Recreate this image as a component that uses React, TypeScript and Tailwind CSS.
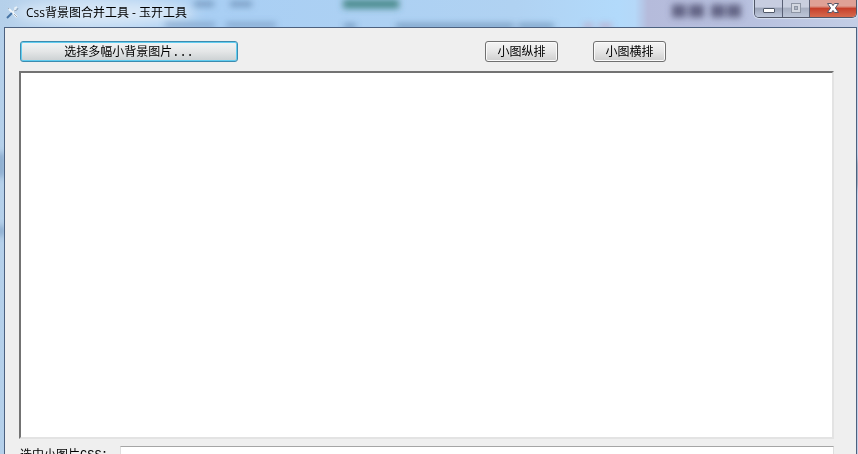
import React, { useState } from 'react';

const toolButton =
  'h-[21px] rounded-[3px] border border-[#707070] bg-linear-to-b from-[#f4f4f4] via-[#e6e6e6] to-[#cfcfcf] pt-0.5 text-center shadow-[inset_0_0_0_1px_#fafafa]';

// blurred desktop content that shines through the glass frame
const GlassBackdrop = () => (
  <svg
    aria-hidden="true"
    className="absolute inset-0 h-full w-full"
    preserveAspectRatio="none"
    viewBox="0 0 858 454"
  >
    <defs>
      <linearGradient id="glass" x1="0" x2="1" y1="0" y2="0">
        <stop offset="0" stopColor="#b5d0ea" />
        <stop offset="0.1" stopColor="#bdd7f1" />
        <stop offset="0.25" stopColor="#a9cff4" />
        <stop offset="0.6" stopColor="#b0d2f2" />
        <stop offset="0.72" stopColor="#b2dafb" />
        <stop offset="0.74" stopColor="#b5d8f8" />
        <stop offset="0.755" stopColor="#b5bbdb" />
        <stop offset="0.88" stopColor="#b8c1df" />
        <stop offset="1" stopColor="#c3cee6" />
      </linearGradient>
      <filter id="soft" x="-20%" y="-100%" width="140%" height="300%">
        <feGaussianBlur stdDeviation="3" />
      </filter>
      <filter id="haze" x="-30%" y="-100%" width="160%" height="300%">
        <feGaussianBlur stdDeviation="6" />
      </filter>
    </defs>
    <rect width="858" height="454" fill="url(#glass)" />
    <ellipse cx="105" cy="13" rx="90" ry="11" fill="#d9e8f7" filter="url(#haze)" />
    <g filter="url(#soft)">
      <path d="M194 4h20M230 4h22" stroke="#6184ab" strokeWidth="6" opacity="0.65" />
      <path d="M165 25h50M226 25h50" stroke="#6b8eb4" strokeWidth="5" opacity="0.65" />
      <path d="M343 4h56" stroke="#3a7f79" strokeWidth="9" opacity="0.85" />
      <path d="M344 26h12M396 26h118M518 26h36" stroke="#5379a0" strokeWidth="4" opacity="0.75" />
      <path d="M584 26h9M599 26h13" stroke="#c9859f" strokeWidth="4" opacity="0.6" />
      <path d="M672 11h14M689 11h15M711 11h14M727 11h14" stroke="#514f70" strokeWidth="13" opacity="0.8" />
      <path d="M1 153v24M1 226v10" stroke="#527ba8" strokeWidth="4" opacity="0.8" />
      <path d="M857 160v28" stroke="#333a4a" strokeWidth="3" opacity="0.7" />
    </g>
  </svg>
);

const AppIcon = () => (
  <svg aria-hidden="true" className="h-4 w-4" viewBox="0 0 16 16" fill="none">
    <path d="M5 4l8 8" stroke="#f2f6fa" strokeWidth="2" />
    <path d="M4 3l1 1M10 9l3 3" stroke="#a3adb8" strokeWidth="1" />
    <path d="M3 13l5-5" stroke="#4674a5" strokeWidth="2" />
    <path d="M8 8l3-3V3l2-1" stroke="#e9f1f7" strokeWidth="1.6" />
    <path d="M10 6l3-1 1-2" stroke="#8798aa" strokeWidth="0.8" />
  </svg>
);

const CaptionButtons = () => (
  <div className="mr-px flex h-[18px] w-[103px] overflow-hidden rounded-b-[5px] border border-t-0 border-[#515768] shadow-[0_0_1px_1px_#d8e1f0]">
    <button
      type="button"
      aria-label="最小化"
      className="flex w-[28px] items-center justify-center border-r border-[#596075] bg-linear-to-b from-[#c7cde0] from-40% via-[#9ca5b9] via-50% to-[#bec8dc]"
    >
      <svg className="h-4 w-4" viewBox="0 0 16 16">
        <rect x="2.5" y="7.5" width="11" height="4" rx="0.5" fill="#fff" stroke="#505969" />
      </svg>
    </button>
    <button
      type="button"
      aria-label="最大化"
      disabled
      className="flex w-[27px] items-center justify-center border-r border-[#596075] bg-linear-to-b from-[#c9cfdf] from-40% via-[#a8b0c2] via-50% to-[#bdc6d8]"
    >
      <svg className="h-4 w-4" viewBox="0 0 16 16" fill="none">
        <rect x="3.5" y="2.5" width="9" height="9" fill="#d3d8e1" stroke="#8e96a5" />
        <rect x="6.5" y="5.5" width="3" height="3" fill="#adb5c2" stroke="#8e96a5" />
      </svg>
    </button>
    <button
      type="button"
      aria-label="关闭"
      className="flex flex-1 items-center justify-center bg-linear-to-b from-[#dfa196] from-35% via-[#c6402b] via-50% to-[#d66a4e]"
    >
      <svg className="h-4 w-4" viewBox="0 0 16 16">
        <path
          d="M2.5 2.5h4L8 4.6l1.5-2.1h4L10.4 7l3.1 4.5h-4L8 9.4l-1.5 2.1h-4L5.6 7z"
          fill="#fff"
          stroke="#555565"
        />
      </svg>
    </button>
  </div>
);

const App: React.FC = () => {
  const [output, setOutput] = useState('');
  const [selectedCss, setSelectedCss] = useState('');

  return (
    <div className="relative h-screen overflow-hidden font-['Liberation_Mono','Noto_Sans_CJK_SC',monospace] text-[12px] leading-4 text-black">
      <GlassBackdrop />
      <div className="relative">
        <header className="flex h-[27px] items-start justify-between pl-1">
          <div className="flex items-center gap-1.5 pt-[5px]">
            <AppIcon />
            <h1 className="font-['Open_Sans','Noto_Sans_CJK_SC',sans-serif]">
              Css背景图合并工具 - 玉开工具
            </h1>
          </div>
          <CaptionButtons />
        </header>
        <main className="mr-px ml-1 border border-[#4c617f] bg-[#efefef] pt-[13px] pr-[22px] pb-4 pl-[14px]">
          <div className="flex pl-px">
            <button
              type="button"
              className="h-[21px] w-[218px] rounded-[3px] border border-[#3c8cb0] bg-linear-to-b from-[#f2f4f5] via-[#e4e6e7] to-[#cbd0d2] pt-0.5 text-center shadow-[inset_0_0_0_1px_#62cdf0]"
            >
              选择多幅小背景图片...
            </button>
            <button type="button" className={`${toolButton} ml-[247px] w-[73px]`}>
              小图纵排
            </button>
            <button type="button" className={`${toolButton} ml-[35px] w-[73px]`}>
              小图横排
            </button>
          </div>
          <textarea
            aria-label="合并结果"
            value={output}
            onChange={(e) => setOutput(e.target.value)}
            className="mt-[9px] block h-[368px] w-full resize-none border-2 border-t-[#737373] border-r-[#e3e3e3] border-b-[#e3e3e3] border-l-[#737373] bg-white p-1 outline-none"
          />
          <div className="mt-[7px] flex pl-px">
            <label htmlFor="selected-css" className="w-[100px] shrink-0 pt-0.5 whitespace-nowrap">
              选中小图片CSS：
            </label>
            <input
              id="selected-css"
              type="text"
              value={selectedCss}
              onChange={(e) => setSelectedCss(e.target.value)}
              className="h-[21px] min-w-0 flex-1 border border-t-[#a5a5a5] border-r-[#dedede] border-b-[#dedede] border-l-[#dedede] bg-white px-1 outline-none"
            />
          </div>
        </main>
      </div>
    </div>
  );
};

export default App;
